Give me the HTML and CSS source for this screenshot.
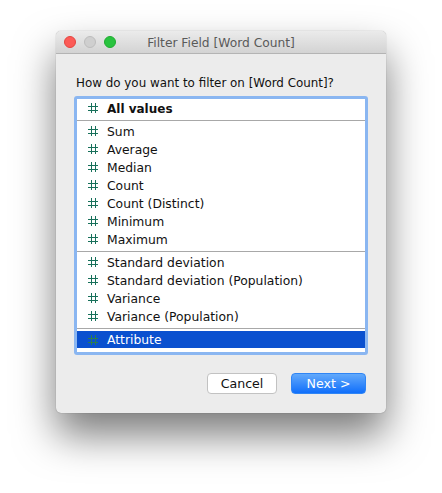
FILE: index.html
```html
<!DOCTYPE html>
<html lang="en">
<head>
<meta charset="utf-8">
<title>Filter Field [Word Count]</title>
<link rel="stylesheet" href="styles.css">
</head>
<body>
<svg width="0" height="0" class="defs"><defs>
<symbol id="hash" viewBox="0 0 10 10"><path d="M3.5 0V10M7.5 0V10M0 3.5H10M0 7.5H10" fill="none" stroke="currentColor" stroke-width="1"/></symbol>
</defs></svg>
<div class="window">
  <div class="titlebar">
    <div class="lights"><span class="light red"></span><span class="light gray"></span><span class="light green"></span></div>
    <div class="title">Filter Field [Word Count]</div>
  </div>
  <div class="content">
    <p class="prompt">How do you want to filter on [Word Count]?</p>
    <div class="focus">
      <div class="list">
        <div class="group first"><div class="row bold"><svg class="hash"><use href="#hash"/></svg><span>All values</span></div></div>
        <div class="group">
          <div class="row"><svg class="hash"><use href="#hash"/></svg><span>Sum</span></div>
          <div class="row"><svg class="hash"><use href="#hash"/></svg><span>Average</span></div>
          <div class="row"><svg class="hash"><use href="#hash"/></svg><span>Median</span></div>
          <div class="row"><svg class="hash"><use href="#hash"/></svg><span>Count</span></div>
          <div class="row"><svg class="hash"><use href="#hash"/></svg><span>Count (Distinct)</span></div>
          <div class="row"><svg class="hash"><use href="#hash"/></svg><span>Minimum</span></div>
          <div class="row"><svg class="hash"><use href="#hash"/></svg><span>Maximum</span></div>
        </div>
        <div class="group">
          <div class="row"><svg class="hash"><use href="#hash"/></svg><span>Standard deviation</span></div>
          <div class="row"><svg class="hash"><use href="#hash"/></svg><span>Standard deviation (Population)</span></div>
          <div class="row"><svg class="hash"><use href="#hash"/></svg><span>Variance</span></div>
          <div class="row"><svg class="hash"><use href="#hash"/></svg><span>Variance (Population)</span></div>
        </div>
        <div class="group last"><div class="row selected"><svg class="hash"><use href="#hash"/></svg><span>Attribute</span></div></div>
      </div>
    </div>
    <div class="actions">
      <button class="btn cancel">Cancel</button>
      <button class="btn next">Next &gt;</button>
    </div>
  </div>
</div>
</body>
</html>
```
FILE: styles.css
```css
* { box-sizing: border-box; }
html, body { margin: 0; height: 100%; }
body {
  background: #fff;
  font-family: "DejaVu Sans", sans-serif;
  font-size: 12px;
  padding: 31px 56px 0;
  overflow: hidden;
}
.defs { display: block; height: 0; }
.window {
  width: 330px;
  height: 382px;
  background: #ececec;
  border-radius: 5px;
  box-shadow: 0 0 1px rgba(0,0,0,.45), 0 22px 40px rgba(0,0,0,.52);
  display: flex;
  flex-direction: column;
}
.titlebar {
  height: 23px;
  display: flex;
  align-items: center;
  padding-left: 8px;
  background: linear-gradient(#ebebeb, #d3d3d3);
  border-bottom: 1px solid #b4b4b4;
  border-radius: 5px 5px 0 0;
}
.lights { display: flex; gap: 8px; }
.light { width: 12px; height: 12px; border-radius: 50%; }
.red { background: #fc5b57; border: 1px solid #e5453f; }
.gray { background: #cfcfcf; border: 1px solid #bdbdbd; }
.green { background: #29c33f; border: 1px solid #20ac30; }
.title {
  flex: 1;
  text-align: center;
  color: #5a5a5a;
  padding: 2px 60px 0 0;
  font-size: 12.25px;
}
.content { flex: 1; padding: 21px 18px 0; display: flex; flex-direction: column; }
.prompt { margin: 0 0 5px; padding-left: 2px; height: 16px; line-height: 16px; color: #111; font-size: 11.9px; white-space: nowrap; }
.focus {
  width: 294px;
  height: 259px;
  padding: 3px;
  background: #8ab6f1;
  border-radius: 3px;
}
.list {
  height: 100%;
  background: #fff;
  color: #111;
  font-size: 12.35px;
}
.group { padding: 1px 0 3px; border-bottom: 1px solid #a8a8a8; }
.group.first { padding: 0 0 3px; }
.group.last { border-bottom: 0; padding: 2px 0 0; }
.row {
  height: 18px;
  display: flex;
  align-items: center;
  gap: 9px;
  padding-left: 11px;
  line-height: 18px;
}
.row span { padding-top: 2px; }
.hash { width: 10px; height: 10px; color: #17705a; flex: none; }
.bold { font-weight: 700; font-size: 12px; }
.selected { background: #0a50cf; color: #fff; height: 17px; }
.selected span { padding-top: 0; }
.selected .hash { color: #2c7d50; }
.actions { display: flex; justify-content: flex-end; gap: 14px; padding: 18px 2px 0 0; }
.btn {
  font-family: inherit;
  font-size: 12.6px;
  height: 21px;
  padding: 0;
  border-radius: 4px;
  line-height: 19px;
}
.cancel { width: 70px; background: #fff; border: 1px solid #c2c2c2; color: #111; }
.next { width: 75px; background: linear-gradient(#62a9fb, #106ffb); border: 1px solid #2f85f5; color: #fff; }
```
